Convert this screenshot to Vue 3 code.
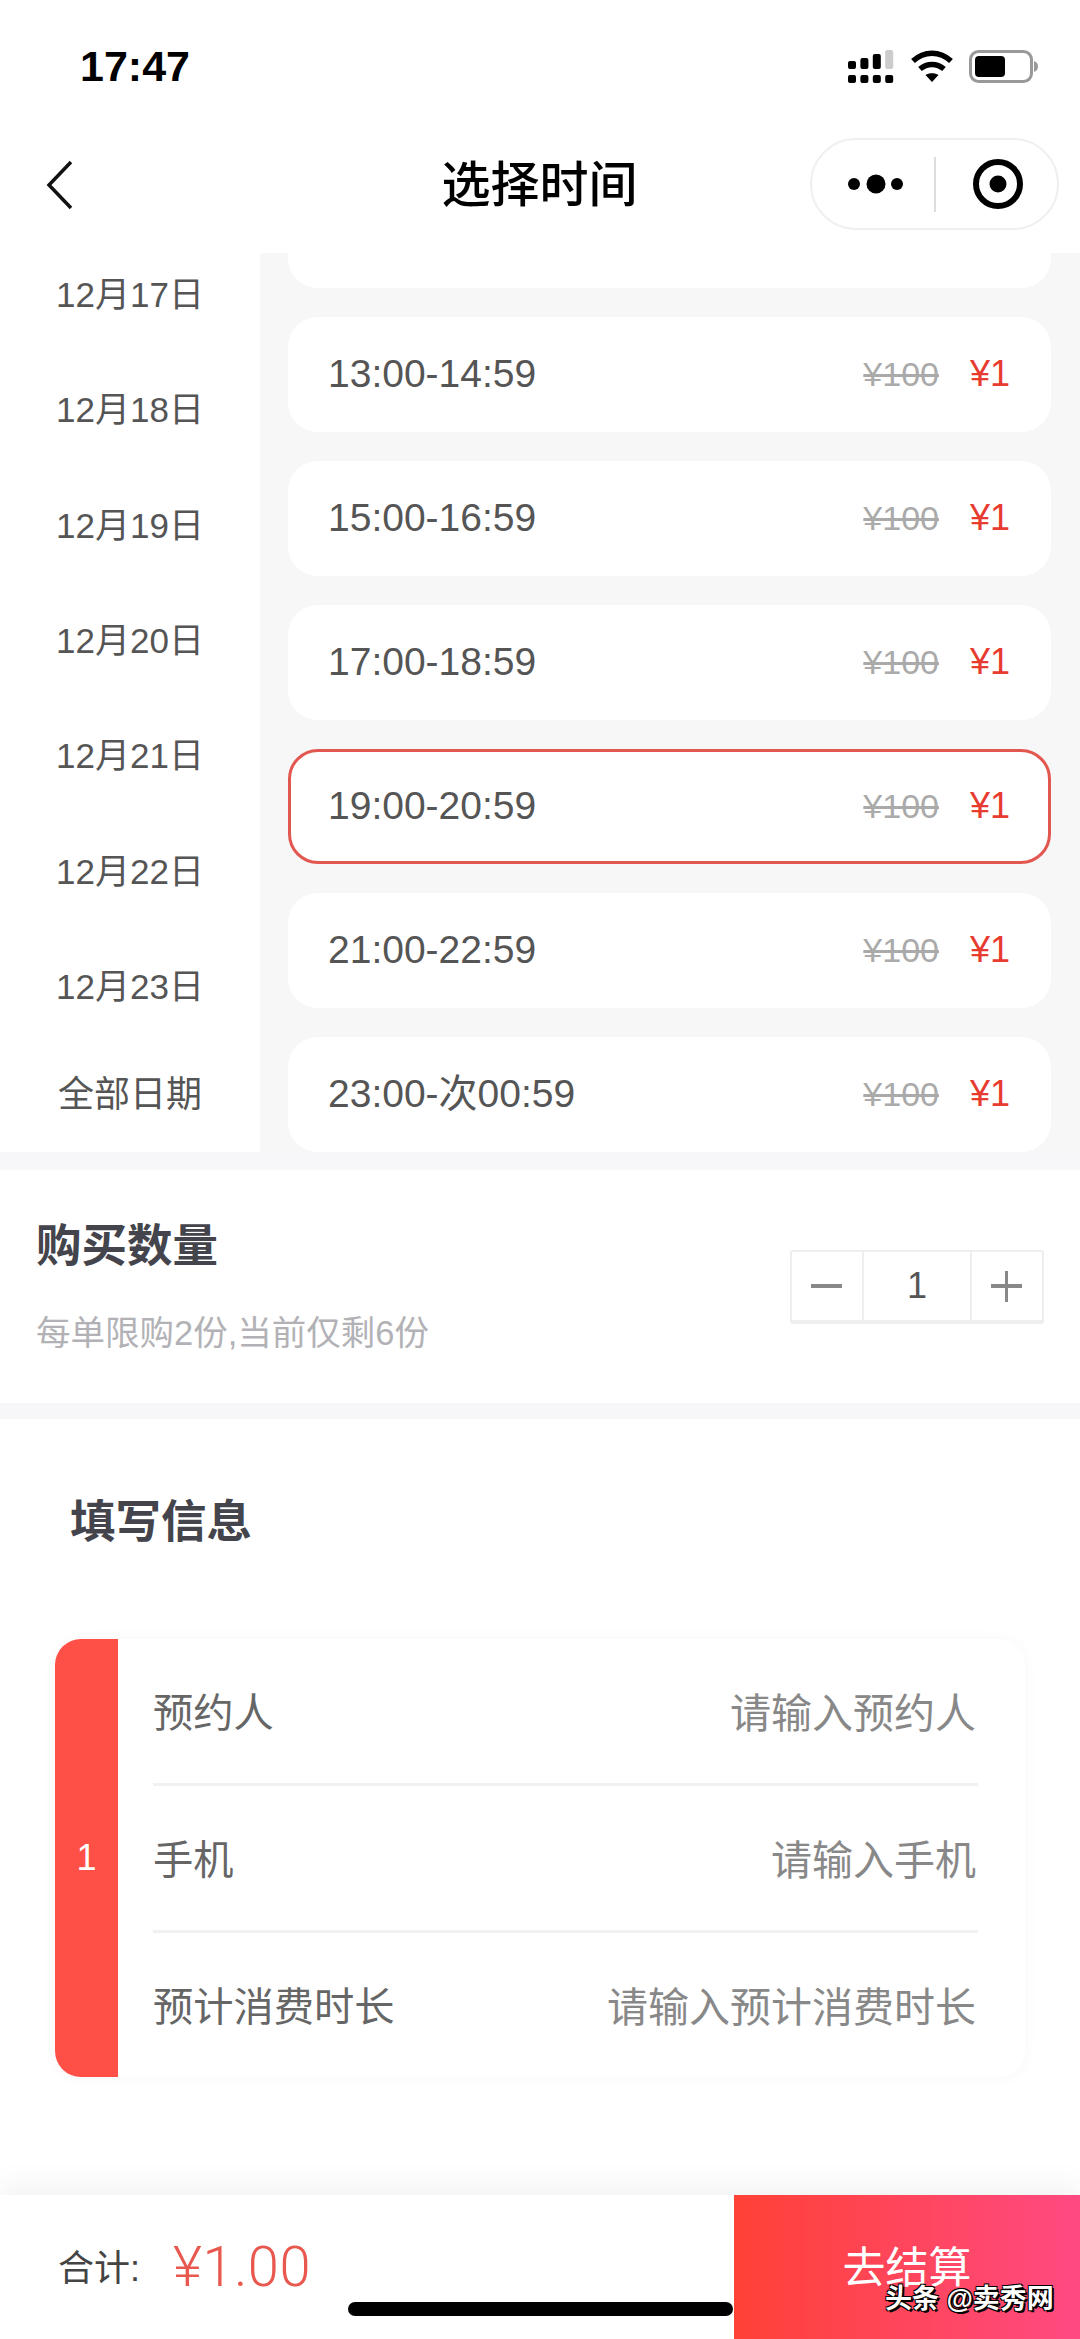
<template>
  <div class="page">
    <div class="status">
      <span class="clock">17:47</span>
      <svg class="status-icons" width="190" height="34" viewBox="848 50 190 34">
        <g fill="#000">
          <rect v-for="x in [848, 860.4, 872.8, 885.2]" :key="x" :x="x" y="75" width="8" height="8" rx="2" />
          <rect x="848" y="61" width="8" height="8" rx="2" />
          <rect x="860.4" y="58" width="8" height="11" rx="2" />
          <rect x="872.8" y="54" width="8" height="15" rx="2" />
        </g>
        <rect x="885.2" y="50" width="8" height="19" rx="2" fill="#ccc" />
        <g fill="none" stroke="#000" stroke-width="5.5">
          <path d="M913 61 C924 50.500 940 50.500 951 61" />
          <path d="M920 69 C927 63 937 63 944 69" />
        </g>
        <path d="M925.500 75 C929 72.500 935 72.500 938.500 75 L932 82 Z" fill="#000" />
        <rect x="970.500" y="51.500" width="61" height="30" rx="8" fill="none" stroke="#999" stroke-width="3" />
        <rect x="975" y="56" width="30" height="21" rx="4" fill="#000" />
        <path d="M1034 61 C1037 62 1038 64 1038 66.500 C1038 69 1037 71 1034 72 Z" fill="#999" />
      </svg>
    </div>

    <div class="nav">
      <svg class="back" width="28" height="50" viewBox="0 0 28 50">
        <path d="M25 2 L3 25 L25 48" fill="none" stroke="#111" stroke-width="3.500" />
      </svg>
      <h1 class="nav-title">选择时间</h1>
      <div class="capsule">
        <svg width="60" height="20" viewBox="0 0 60 20">
          <circle cx="7" cy="10" r="6" fill="#000" />
          <circle cx="29" cy="10" r="9.500" fill="#000" />
          <circle cx="50" cy="10" r="6" fill="#000" />
        </svg>
        <span class="capsule-line"></span>
        <svg width="50" height="50" viewBox="0 0 50 50">
          <circle cx="25" cy="25" r="22" fill="none" stroke="#000" stroke-width="6" />
          <circle cx="25" cy="25" r="8.500" fill="#000" />
        </svg>
      </div>
    </div>

    <div class="picker">
      <div class="dates">
        <div class="date-list">
          <div v-for="d in dates" :key="d" class="date">{{ d }}</div>
        </div>
        <div class="date-all">全部日期</div>
      </div>
      <div class="slots">
        <div class="slot-cut"></div>
        <div
          v-for="s in slots"
          :key="s"
          class="slot"
          :class="{ active: s === selected }"
        >
          <span class="slot-time">{{ s }}</span>
          <span class="slot-old">¥100</span>
          <span class="slot-price">¥1</span>
        </div>
      </div>
    </div>

    <div class="quantity">
      <div>
        <h2 class="heading">购买数量</h2>
        <p class="limit">每单限购2份,当前仅剩6份</p>
      </div>
      <div class="stepper">
        <div class="step-btn minus"><i></i></div>
        <div class="step-num">1</div>
        <div class="step-btn plus"><i></i><b></b></div>
      </div>
    </div>

    <div class="info">
      <h2 class="heading info-title">填写信息</h2>
      <div class="form">
        <div class="form-index">1</div>
        <div class="form-rows">
          <div v-for="f in fields" :key="f" class="form-row">
            <span class="form-label">{{ f }}</span>
            <span class="form-hint">请输入{{ f }}</span>
          </div>
        </div>
      </div>
    </div>

    <div class="footer">
      <div class="total">
        <span class="total-label">合计:</span>
        <span class="total-price">¥1.00</span>
      </div>
      <div class="pay">去结算</div>
    </div>

    <div class="home-bar"></div>
    <div class="mark">头条 @卖秀网</div>
  </div>
</template>

<script setup>
const dates = ['12月17日', '12月18日', '12月19日', '12月20日', '12月21日', '12月22日', '12月23日']
const slots = ['13:00-14:59', '15:00-16:59', '17:00-18:59', '19:00-20:59', '21:00-22:59', '23:00-次00:59']
const selected = '19:00-20:59'
const fields = ['预约人', '手机', '预计消费时长']
</script>

<style>
body {
  background: #fff;
}
</style>

<style scoped>
.page {
  position: relative;
  width: 1080px;
  height: 2339px;
  overflow: hidden;
  display: flex;
  flex-direction: column;
  background: #f7f7f9;
  font-family: "Liberation Sans", "Noto Sans CJK SC", sans-serif;
  color: #555;
}
h1, h2, p {
  margin: 0;
}
svg {
  display: block;
  flex: none;
}

.status {
  height: 117px;
  flex: none;
  display: flex;
  justify-content: space-between;
  align-items: flex-start;
  padding: 41px 42px 0 80px;
  box-sizing: border-box;
  background: #fff;
}
.clock {
  font-size: 43px;
  line-height: 50px;
  font-weight: 700;
  color: #000;
}
.status-icons {
  margin-top: 9px;
}

.nav {
  height: 136px;
  flex: none;
  position: relative;
  display: flex;
  align-items: center;
  justify-content: center;
  background: #fff;
}
.back {
  position: absolute;
  left: 46px;
  top: 43px;
}
.nav-title {
  font-size: 49px;
  line-height: 60px;
  font-weight: 500;
  color: #000;
  margin-right: 1px;
}
.capsule {
  position: absolute;
  left: 810px;
  top: 21px;
  width: 249px;
  height: 92px;
  box-sizing: border-box;
  border: 2px solid #f0f0f0;
  border-radius: 46px;
  display: flex;
  align-items: center;
  padding-left: 35px;
}
.capsule-line {
  width: 2px;
  height: 55px;
  margin: 0 37px 0 27px;
  background: #ddd;
}

.picker {
  height: 899px;
  flex: none;
  display: flex;
  overflow: hidden;
}
.dates {
  width: 260px;
  flex: none;
  display: flex;
  flex-direction: column;
  background: #fff;
}
.date-list {
  flex: 1;
  min-height: 0;
  overflow: hidden;
}
.date {
  height: 115.330px;
  display: flex;
  align-items: center;
  justify-content: center;
  font-size: 35px;
  color: #555;
}
.date:first-child {
  margin-top: -19px;
}
.date-all {
  height: 118px;
  flex: none;
  display: flex;
  align-items: center;
  justify-content: center;
  font-size: 36px;
  color: #555;
  padding-bottom: 2px;
}
.slots {
  flex: 1;
  display: flex;
  flex-direction: column;
  gap: 29px;
  padding: 0 29px 0 28px;
  background: #f7f7f7;
}
.slot-cut {
  height: 35px;
  flex: none;
  background: #fff;
  border-radius: 0 0 30px 30px;
}
.slot {
  height: 115px;
  flex: none;
  box-sizing: border-box;
  display: flex;
  align-items: center;
  padding: 0 41px 2px 40px;
  background: #fff;
  border-radius: 30px;
}
.slot.active {
  border: 3px solid #e2574f;
  padding: 0 38px 2px 37px;
}
.slot-time {
  flex: 1;
  font-size: 39px;
  line-height: 50px;
  color: #555;
}
.slot-old {
  font-size: 34px;
  line-height: 50px;
  color: #aaa;
  text-decoration: line-through;
  margin-right: 31px;
}
.slot-price {
  font-size: 36px;
  line-height: 50px;
  color: #e83b30;
}

.quantity {
  height: 233px;
  flex: none;
  box-sizing: border-box;
  margin-top: 18px;
  padding: 47px 36px 0;
  display: flex;
  justify-content: space-between;
  align-items: flex-start;
  position: relative;
  background: #fff;
}
.heading {
  font-size: 45.500px;
  line-height: 60px;
  font-weight: 700;
  color: #44444c;
}
.limit {
  margin-top: 34px;
  font-size: 34.500px;
  line-height: 44px;
  color: #b2b2b6;
}
.stepper {
  position: absolute;
  left: 790px;
  top: 80px;
  width: 254px;
  height: 74px;
  box-sizing: border-box;
  display: flex;
  border: 2px solid #eee;
  border-bottom-width: 4px;
  border-radius: 3px;
}
.step-btn {
  position: relative;
  width: 70px;
  flex: none;
}
.step-btn i {
  position: absolute;
  left: 19px;
  top: 32px;
  width: 31px;
  height: 4px;
  background: #888;
}
.step-btn b {
  position: absolute;
  left: 33px;
  top: 19px;
  width: 3px;
  height: 31px;
  background: #888;
}
.step-num {
  flex: 1;
  display: flex;
  align-items: center;
  justify-content: center;
  border-left: 2px solid #eee;
  border-right: 2px solid #eee;
  font-size: 36px;
  color: #555;
}

.info {
  flex: 1;
  min-height: 0;
  margin-top: 16px;
  padding: 74px 55px 0;
  background: #fff;
}
.info-title {
  margin-left: 15px;
}
.form {
  display: flex;
  margin-top: 86px;
  height: 438px;
  border-radius: 26px;
  background: #fff;
  overflow: hidden;
  box-shadow: 0 0 16px rgba(0, 0, 0, 0.035);
}
.form-index {
  width: 63px;
  flex: none;
  display: flex;
  align-items: center;
  justify-content: center;
  background: #ff5047;
  color: #fff;
  font-size: 36px;
}
.form-rows {
  flex: 1;
  padding: 0 47px 0 35px;
  display: flex;
  flex-direction: column;
}
.form-row {
  flex: 1;
  display: flex;
  justify-content: space-between;
  align-items: center;
  padding-bottom: 3px;
  border-bottom: 3px solid #f1f1f1;
}
.form-row:last-child {
  border-bottom: 0;
}
.form-label {
  font-size: 40.250px;
  color: #666;
}
.form-hint {
  font-size: 41px;
  color: #888;
  margin-right: 2px;
}

.footer {
  height: 144px;
  flex: none;
  display: flex;
  background: #fff;
  box-shadow: 0 -8px 30px rgba(0, 0, 0, 0.06);
  position: relative;
}
.total {
  flex: 1;
  display: flex;
  align-items: center;
  padding-left: 58px;
}
.total-label {
  font-size: 36px;
  color: #444;
  width: 115px;
  padding-bottom: 4px;
}
.total-price {
  font-family: Roboto, "Liberation Sans", sans-serif;
  font-weight: 300;
  font-size: 56px;
  line-height: 66px;
  letter-spacing: 0.5px;
  color: #e8584e;
}
.pay {
  width: 346px;
  flex: none;
  display: flex;
  align-items: center;
  justify-content: center;
  font-size: 43px;
  color: #fff;
  padding-bottom: 6px;
  box-sizing: border-box;
  background: linear-gradient(90deg, #ff4136, #ff4a82);
}

.home-bar {
  position: absolute;
  left: 348px;
  top: 2302px;
  width: 385px;
  height: 14px;
  border-radius: 7px;
  background: #000;
}
.mark {
  position: absolute;
  left: 885px;
  top: 2283px;
  font-size: 27px;
  line-height: 33px;
  font-weight: 700;
  color: #fff;
  white-space: nowrap;
  text-shadow: 2px 2px 0 #000, -1px -1px 0 #000, 1px -1px 0 #000, -1px 1px 0 #000;
}
</style>
